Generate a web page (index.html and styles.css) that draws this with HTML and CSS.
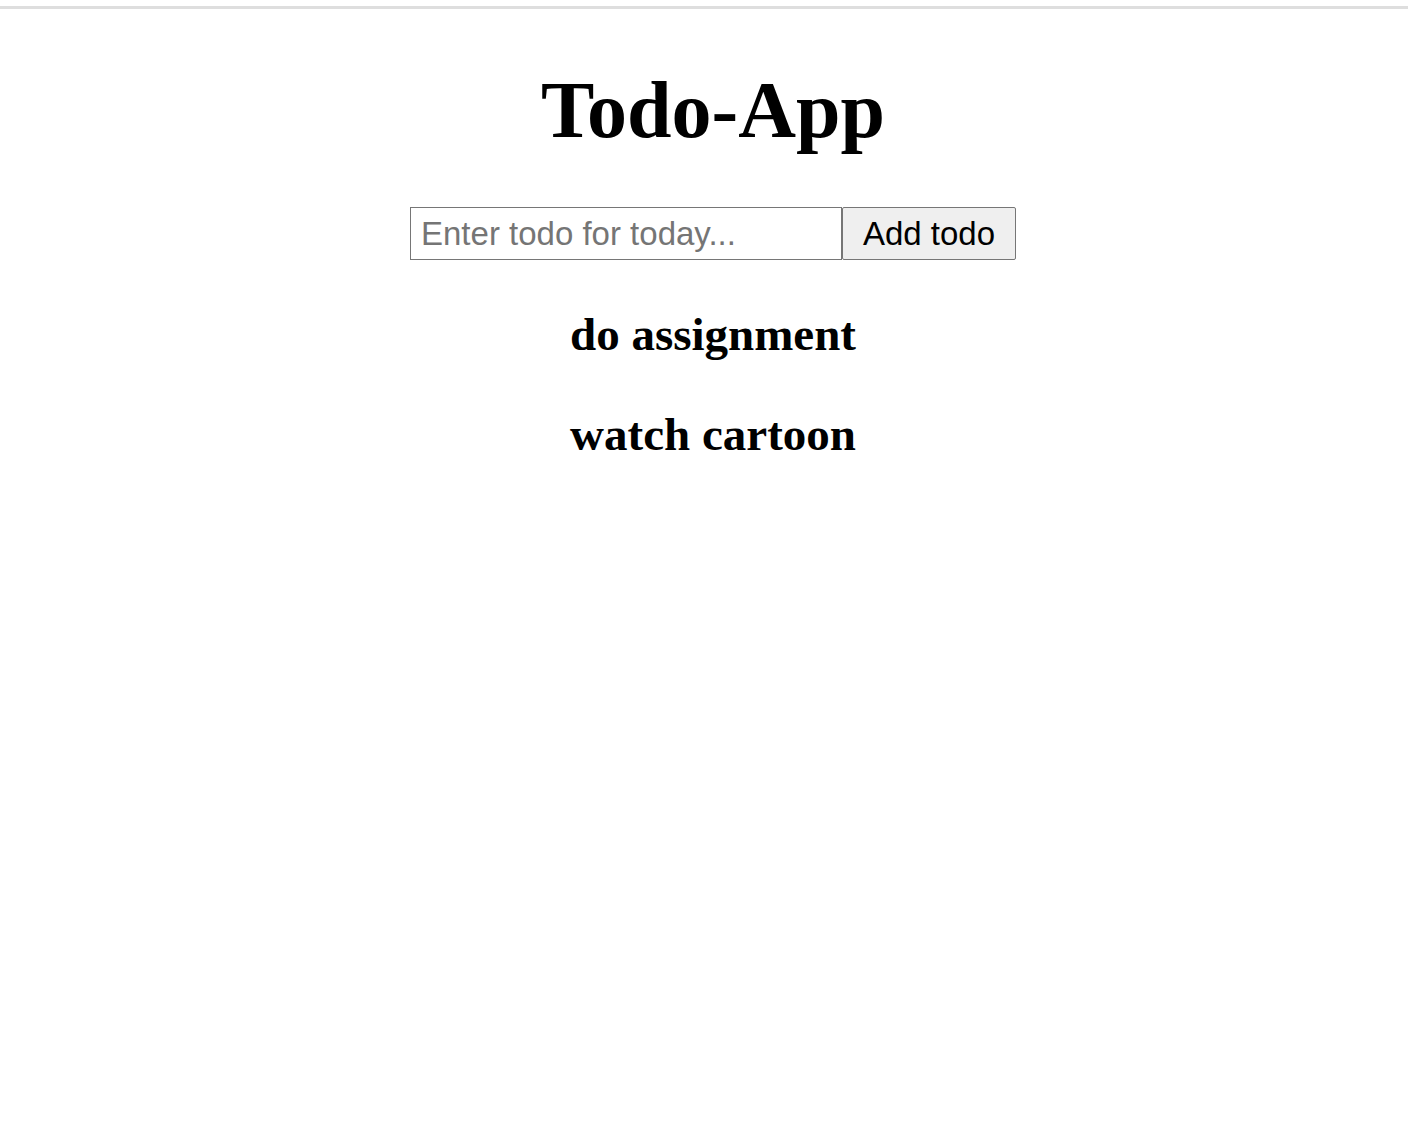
FILE: index.html
```html
<!DOCTYPE html>
<html>
<head>
<meta charset="utf-8">
<link rel="stylesheet" href="styles.css">
</head>
<body>
<div class="topbar"></div>
<main class="app">
  <h1 class="title">Todo-App</h1>
  <form class="add-form">
    <input class="todo-input" type="text" placeholder="Enter todo for today...">
    <button class="add-btn" type="button">Add todo</button>
  </form>
  <div class="todos">
    <h2 class="todo">do assignment</h2>
    <h2 class="todo">watch cartoon</h2>
  </div>
</main>
</body>
</html>
```
FILE: styles.css
```css
html, body {
  margin: 0;
  padding: 0;
  background: #fff;
}
body {
  font-family: "Liberation Serif", "Times New Roman", serif;
  color: #000;
}
.topbar {
  margin-top: 6px;
  height: 3px;
  background: #dedede;
}
.app {
  padding-left: 18px;
  display: flex;
  flex-direction: column;
  align-items: center;
}
.title {
  font-size: 80px;
  font-weight: bold;
  line-height: 86px;
  margin: 58px 0 0 0;
}
.add-form {
  display: flex;
  margin-top: 54px;
}
.todo-input {
  box-sizing: border-box;
  width: 432px;
  height: 53px;
  border: 1px solid #767676;
  padding: 0 10px;
  margin: 0;
  font-family: "Liberation Sans", Arial, sans-serif;
  font-size: 33px;
  color: #000;
  outline: none;
}
.todo-input::placeholder {
  color: #757575;
}
.add-btn {
  box-sizing: border-box;
  height: 53px;
  width: 174px;
  margin: 0;
  border: 1px solid #767676;
  border-radius: 2px;
  background: #efefef;
  font-family: "Liberation Sans", Arial, sans-serif;
  font-size: 33px;
  color: #000;
  padding: 0;
  white-space: nowrap;
}
.todos {
  margin-top: 48px;
  display: flex;
  flex-direction: column;
  align-items: center;
  gap: 48px;
}
.todo {
  font-size: 47px;
  font-weight: bold;
  line-height: 52px;
  margin: 0;
}
```
